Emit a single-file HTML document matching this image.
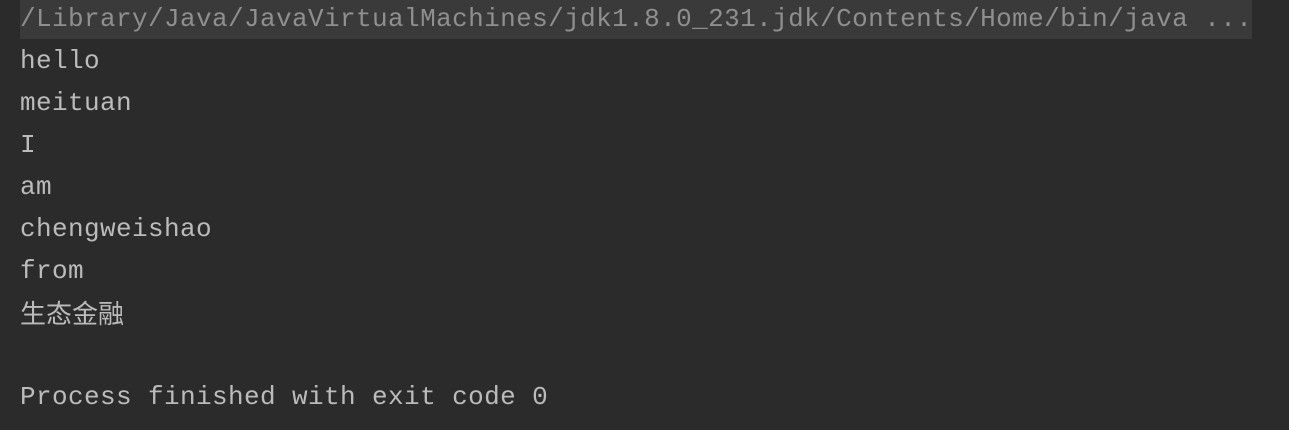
<!DOCTYPE html>
<html><head><meta charset="utf-8"><style>
html,body{margin:0;padding:0;width:1289px;height:430px;background:#2b2b2b;overflow:hidden}
.wrap{position:absolute;left:20px;top:-2px;font-family:"Liberation Mono","Noto Sans CJK SC",monospace;font-size:26px;letter-spacing:0.4px;color:#bbbbbb;}
.l{height:42px;line-height:42px;white-space:pre}
.hl{position:absolute;left:20px;top:0;width:1232px;height:39px;background:#3a3a3a}
.cmd{color:#8f8f8f}
.cjk{font-family:"Noto Sans CJK SC",sans-serif;letter-spacing:0;font-size:26px}
</style></head><body>
<div class="hl"></div>
<div class="wrap">
<div class="l cmd">/Library/Java/JavaVirtualMachines/jdk1.8.0_231.jdk/Contents/Home/bin/java ...</div>
<div class="l">hello</div>
<div class="l">meituan</div>
<div class="l">I</div>
<div class="l">am</div>
<div class="l">chengweishao</div>
<div class="l">from</div>
<div class="l cjk">生态金融</div>
<div class="l"> </div>
<div class="l">Process finished with exit code 0</div>
</div>
</body></html>
